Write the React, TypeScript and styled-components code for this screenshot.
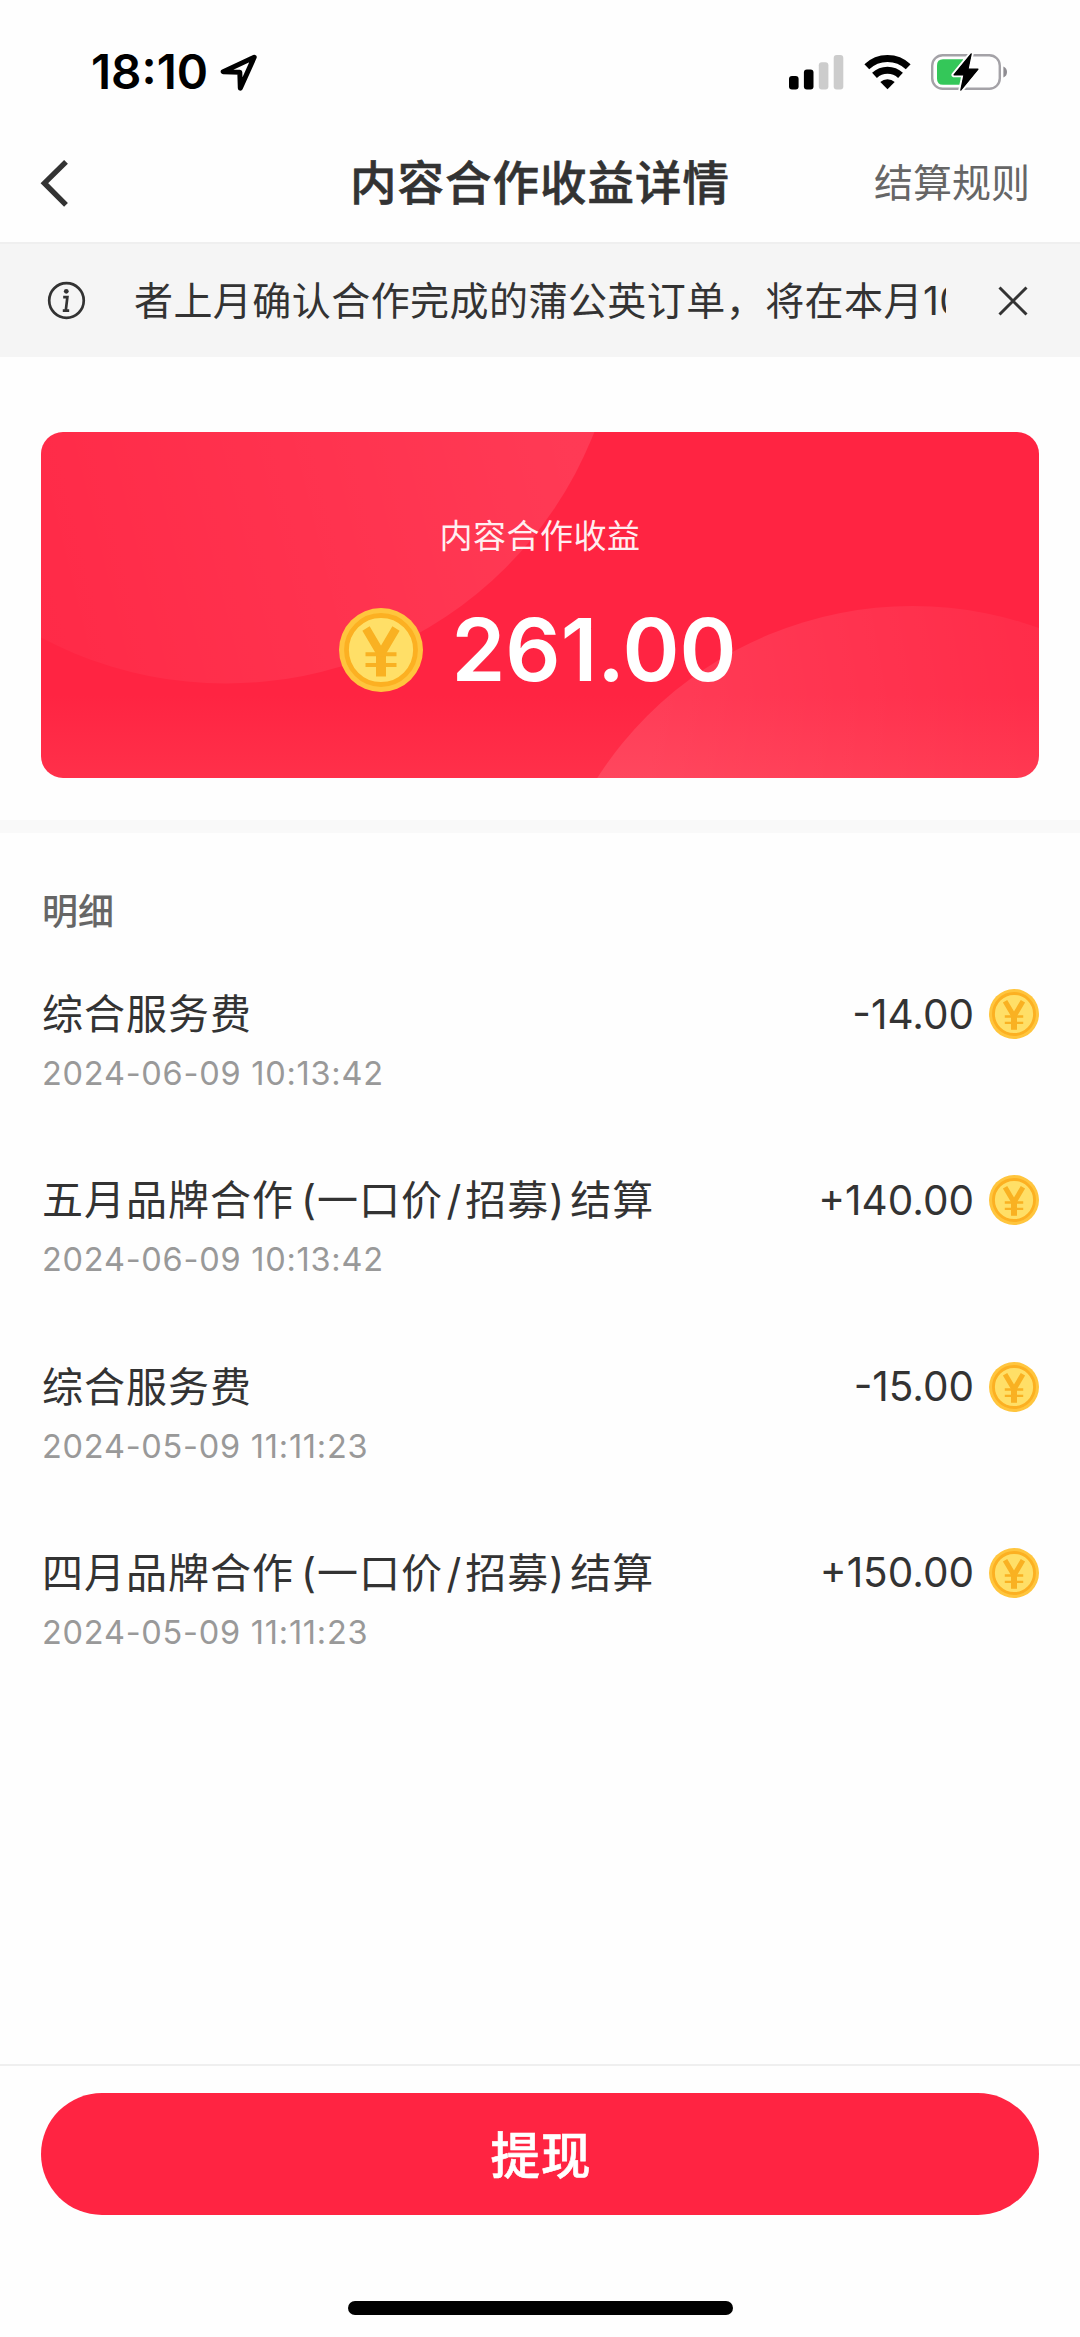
import React from 'react';
import styled, { createGlobalStyle } from 'styled-components';

const GlobalStyle = createGlobalStyle`
  * { box-sizing: border-box; }
  body { margin: 0; background: #fff; }
`;

const Screen = styled.main`
  display: flex;
  flex-direction: column;
  width: 1080px;
  height: 2337px;
  overflow: hidden;
  background: #fefefe;
  color: #333;
  font-family: Inter, 'Noto Sans CJK SC', sans-serif;
  white-space: nowrap;
`;

const StatusBar = styled.header`
  display: flex;
  align-items: center;
  height: 122px;
  padding: 22px 72px 0 91px;
  color: #000;
`;

const Clock = styled.time`
  width: 129px;
  font-size: 47.5px;
  font-weight: 600;
  line-height: 60px;
`;

const StatusIcons = styled.div`
  display: flex;
  align-items: center;
  gap: 20px;
  margin-left: auto;
`;

const NavBar = styled.nav`
  display: grid;
  grid-template-columns: 300px 1fr 300px;
  align-items: center;
  height: 120px;
  padding: 2px 50px 0 40px;
`;

const IconButton = styled.button`
  display: flex;
  padding: 0;
  border: 0;
  background: none;
  color: #333;
`;

const Title = styled.h1`
  margin: 0;
  padding-left: 10px;
  font-size: 46.5px;
  font-weight: 500;
  line-height: 60px;
  letter-spacing: 1px;
  text-align: center;
  -webkit-text-stroke: 0.6px currentColor;
`;

const RulesLink = styled.a`
  color: #666;
  font-size: 39px;
  line-height: 50px;
  text-align: right;
`;

const Notice = styled.section`
  display: flex;
  align-items: center;
  height: 115px;
  padding: 0 52px 0 47px;
  border-top: 2px solid #efefef;
  background: #f5f5f5;
`;

const NoticeText = styled.p`
  width: 813px;
  margin: 0 52px 0 48px;
  overflow: hidden;
  font-size: 39px;
  line-height: 56px;
  letter-spacing: 0.45px;
`;

const Summary = styled.section`
  padding: 75px 41px 42px;
  border-bottom: 13px solid #f9f9f9;
`;

const Card = styled.div`
  position: relative;
  display: flex;
  flex-direction: column;
  align-items: center;
  height: 346px;
  padding-top: 79px;
  overflow: hidden;
  border-radius: 22px;
  background: linear-gradient(#ff2442 0 76%, #ff304a 100%);
  color: #fff;
`;

const CardArt = styled.svg`
  position: absolute;
  inset: 0;
`;

const CardLabel = styled.span`
  position: relative;
  font-size: 33px;
  font-weight: 400;
  line-height: 50px;
  letter-spacing: 0.5px;
  opacity: 0.92;
`;

const Balance = styled.div`
  position: relative;
  display: flex;
  align-items: center;
  gap: 28px;
  height: 100px;
  margin-top: 39px;
  padding-right: 4px;
`;

const BalanceValue = styled.strong`
  font-size: 86.5px;
  font-weight: 600;
  line-height: 100px;
`;

const Details = styled.section`
  flex: 1;
  padding: 53px 41px 0;
`;

const SectionTitle = styled.h2`
  margin: 0;
  padding-left: 1px;
  color: #666;
  font-size: 36px;
  font-weight: 500;
  line-height: 52px;
`;

const List = styled.ul`
  margin: 46px 0 0;
  padding: 0;
  list-style: none;
`;

const Row = styled.li`
  display: flex;
  align-items: flex-start;
  justify-content: space-between;
  height: 186.3px;
`;

const RowTitle = styled.div`
  padding-left: 1px;
  font-size: 41px;
  line-height: 60px;
  letter-spacing: 1px;
`;

const Mark = styled.span<{ $before?: number; $after?: number }>`
  margin-left: ${(p) => p.$before ?? 0}px;
  margin-right: ${(p) => p.$after ?? 0}px;
`;

const RowTime = styled.time`
  display: block;
  padding-left: 1px;
  color: #999;
  font-size: 32.5px;
  line-height: 60px;
  letter-spacing: 0.75px;
`;

const Amount = styled.span`
  display: flex;
  align-items: center;
  gap: 15px;
  height: 60px;
  font-size: 40.5px;
`;

const Footer = styled.footer`
  display: flex;
  flex-direction: column;
  align-items: center;
  height: 273px;
  padding: 27px 41px 0;
  border-top: 2px solid #efefef;
`;

const WithdrawButton = styled.button`
  width: 100%;
  height: 122px;
  padding: 0 0 4px 2px;
  border: 0;
  border-radius: 61px;
  background: #ff2442;
  color: #fff;
  font-family: inherit;
  font-size: 49.5px;
  font-weight: 500;
  letter-spacing: 1px;
  -webkit-text-stroke: 0.6px currentColor;
`;

const HomeIndicator = styled.div`
  width: 385px;
  height: 14px;
  margin-top: 86px;
  border-radius: 7px;
  background: #000;
`;

const Coin = ({ size }: { size: number }) => (
  <svg width={size} height={size} viewBox="0 0 84 84">
    <circle cx="42" cy="42" r="42" fill="#ffc53d" />
    <circle cx="42" cy="42" r="34.5" fill="#ffdf67" stroke="#fcb022" strokeWidth="4.8" />
    <g fill="none" stroke="#f9b122">
      <path d="M27 20.5 42 46 57 20.5" strokeWidth="8.4" />
      <path d="M42 44V68.5" strokeWidth="10" />
      <path d="M26.5 46.2h31M26.5 57h31" strokeWidth="4" />
    </g>
  </svg>
);

const LocationIcon = () => (
  <svg width="37" height="37" viewBox="0 0 37 37" fill="none" stroke="#000" strokeWidth="5" strokeLinejoin="round">
    <path d="M34.2 3.3 3.2 17.8 19.8 18.2 20.3 34.2Z" />
  </svg>
);

const SignalIcon = () => (
  <svg width="55" height="36" viewBox="0 0 55 36">
    <rect x="0" y="22" width="9.6" height="13.6" rx="3" />
    <rect x="14.9" y="15.5" width="9.6" height="20.1" rx="3" />
    <rect x="29.8" y="8.3" width="9.6" height="27.3" rx="3" fill="#ccc" />
    <rect x="44.7" y="1" width="9.6" height="34.6" rx="3" fill="#ccc" />
  </svg>
);

const WifiIcon = () => (
  <svg width="47" height="36" viewBox="0 0 47 36" fill="none" stroke="#000" strokeWidth="7">
    <path d="M2.8 12.7A30 30 0 0 1 44.2 12.7" />
    <path d="M10.5 21.4A19 19 0 0 1 36.5 21.4" />
    <path d="M23.5 35.3 16.3 28.1A10.5 10.5 0 0 1 30.7 28.1Z" fill="#000" stroke="none" />
  </svg>
);

const BatteryIcon = () => (
  <svg width="77" height="40" viewBox="0 0 77 40">
    <rect x="1.2" y="3.2" width="67.6" height="33.6" rx="10.5" fill="none" stroke="#a4a2a7" strokeWidth="2.4" />
    <path d="M72.4 14.5q3.6 1.5 3.6 5.5t-3.6 5.5z" fill="#8f8d92" />
    <path d="M12 7.2H32V32.8H12Q6 32.8 6 26.8V13.2Q6 7.2 12 7.2Z" fill="#34c759" />
    <path
      d="M40.2 1.8 23 22.8H33L29.8 38.2 47 17.2H37Z"
      fill="#000"
      stroke="#fefefe"
      strokeWidth="5"
      strokeLinejoin="round"
      paintOrder="stroke"
    />
    <path d="M40.2 1.8 23 22.8H33L29.8 38.2 47 17.2H37Z" stroke="#000" strokeWidth="1.2" strokeLinejoin="round" />
  </svg>
);

const BackIcon = () => (
  <svg width="30" height="50" viewBox="0 0 30 50" fill="none" stroke="currentColor" strokeWidth="5.4">
    <path d="M26 3.8 4.4 25.2 26 46.8" />
  </svg>
);

const InfoIcon = () => (
  <svg width="39" height="39" viewBox="0 0 39 39" fill="none" stroke="#333" strokeWidth="2.7">
    <circle cx="19.5" cy="19.5" r="17.3" />
    <circle cx="19.3" cy="10.3" r="2.4" fill="#333" stroke="none" />
    <path d="M16.2 16.2h4.2L18.8 29.6h3.4M15.8 29.6h3" />
  </svg>
);

const CloseIcon = () => (
  <svg width="30" height="30" viewBox="0 0 30 30" fill="none" stroke="currentColor" strokeWidth="3">
    <path d="M1.5 1.5 28.5 28.5M28.5 1.5 1.5 28.5" />
  </svg>
);

const SettlementTitle = ({ month }: { month: string }) => (
  <>
    {month}月品牌合作<Mark $before={7}>(</Mark>一口价<Mark $before={3.5} $after={3}>/</Mark>招募
    <Mark $after={5}>)</Mark>结算
  </>
);

const entries = [
  { title: '综合服务费', time: '2024-06-09 10:13:42', amount: '-14.00' },
  { title: <SettlementTitle month="五" />, time: '2024-06-09 10:13:42', amount: '+140.00' },
  { title: '综合服务费', time: '2024-05-09 11:11:23', amount: '-15.00' },
  { title: <SettlementTitle month="四" />, time: '2024-05-09 11:11:23', amount: '+150.00' },
];

export default function App() {
  return (
    <Screen>
      <GlobalStyle />
      <StatusBar>
        <Clock>18:10</Clock>
        <LocationIcon />
        <StatusIcons>
          <SignalIcon />
          <WifiIcon />
          <BatteryIcon />
        </StatusIcons>
      </StatusBar>
      <NavBar>
        <IconButton aria-label="返回"><BackIcon /></IconButton>
        <Title>内容合作收益详情</Title>
        <RulesLink>结算规则</RulesLink>
      </NavBar>
      <Notice>
        <InfoIcon />
        <NoticeText>者上月确认合作完成的蒲公英订单，将在本月10</NoticeText>
        <IconButton aria-label="关闭"><CloseIcon /></IconButton>
      </Notice>
      <Summary>
        <Card>
          <CardArt width="998" height="346" viewBox="0 0 998 346">
            <defs>
              <linearGradient id="upper" gradientUnits="userSpaceOnUse" x1="0" y1="160" x2="530" y2="30">
                <stop offset="0" stopColor="#fff" stopOpacity="0.03" />
                <stop offset="1" stopColor="#fff" stopOpacity="0.1" />
              </linearGradient>
              <linearGradient id="lower" gradientUnits="userSpaceOnUse" x1="600" y1="300" x2="990" y2="230">
                <stop offset="0" stopColor="#fff" stopOpacity="0.11" />
                <stop offset="1" stopColor="#fff" stopOpacity="0.04" />
              </linearGradient>
            </defs>
            <circle cx="185" cy="-144" r="395.5" fill="url(#upper)" />
            <circle cx="871.5" cy="549" r="375" fill="url(#lower)" />
          </CardArt>
          <CardLabel>内容合作收益</CardLabel>
          <Balance>
            <Coin size={84} />
            <BalanceValue>261.00</BalanceValue>
          </Balance>
        </Card>
      </Summary>
      <Details>
        <SectionTitle>明细</SectionTitle>
        <List>
          {entries.map((entry, index) => (
            <Row key={index}>
              <div>
                <RowTitle>{entry.title}</RowTitle>
                <RowTime>{entry.time}</RowTime>
              </div>
              <Amount>
                {entry.amount}
                <Coin size={50} />
              </Amount>
            </Row>
          ))}
        </List>
      </Details>
      <Footer>
        <WithdrawButton>提现</WithdrawButton>
        <HomeIndicator />
      </Footer>
    </Screen>
  );
}
